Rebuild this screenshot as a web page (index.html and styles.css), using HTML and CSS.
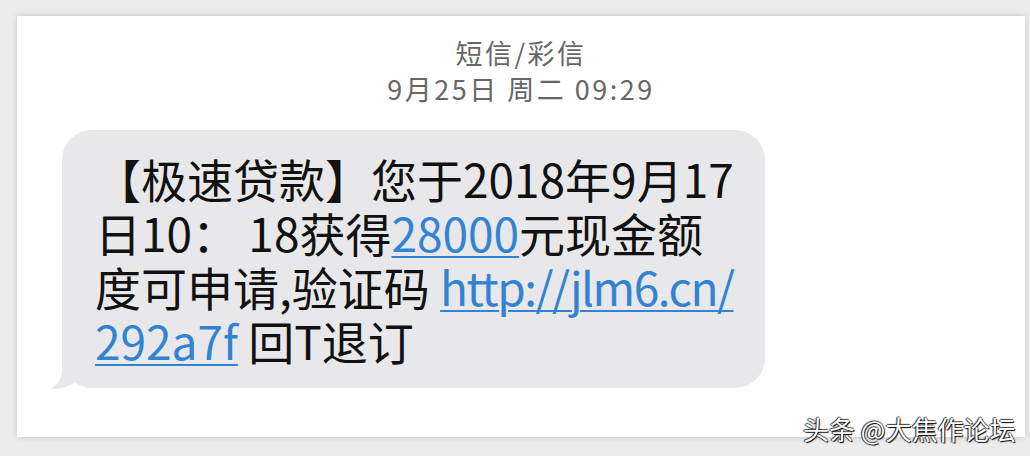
FILE: index.html
```
<!DOCTYPE html>
<html lang="zh-CN">
<head>
    <meta charset="UTF-8">
    <meta name="viewport" content="width=device-width, initial-scale=1.0">
    <title>短信/彩信</title>
    <link rel="stylesheet" href="styles.css">
</head>
<body>
    <div class="card">
        <header class="thread-head">
            <div class="thread-title">短信/彩信</div>
            <div class="thread-date">9月25日 周二 09:29</div>
        </header>

        <div class="bubble">
            <div class="line">【极速贷款】您于2018年9月17</div>
            <div class="line">日10：&nbsp;18获得<a href="#">28000</a>元现金额</div>
            <div class="line">度可申请,验证码 <a href="#" class="url">http://jlm6.cn/</a></div>
            <div class="line"><a href="#">292a7f</a> 回T退订</div>
            <svg class="tail" width="40" height="40" viewBox="0 0 40 40">
                <path d="M14 0 V20 C14 30 9 35 2 39 C12 39.5 22 36 30 31 C34 34 37 37 40 39 V0 Z" fill="#e8e8ea"/>
            </svg>
        </div>
    </div>

    <div class="watermark">头条 @大焦作论坛</div>
</body>
</html>
```

FILE: styles.css
```
body {
    margin: 0;
    background-color: #ececec;
    font-family: "Noto Sans CJK SC", "Noto Sans", sans-serif;
    width: 1030px;
    height: 456px;
    overflow: hidden;
    position: relative;
}
.card {
    margin: 16px 0 0 17px;
    width: 1008px;
    height: 421px;
    background-color: #fff;
    box-shadow: 0 0 6px rgba(0, 0, 0, 0.18);
    overflow: hidden;
}
.thread-head {
    padding-top: 19px;
    text-align: center;
    color: #666;
    font-size: 27px;
    line-height: 36px;
    letter-spacing: 2.5px;
}
.bubble {
    position: relative;
    box-sizing: border-box;
    width: 703px;
    margin: 23px 0 0 45px;
    padding: 21px 0 21px 33px;
    background-color: #e8e8ea;
    border-radius: 30px;
    color: #111;
    font-size: 46px;
    line-height: 54px;
}
.line {
    white-space: nowrap;
    height: 54px;
}
.bubble a {
    color: #3383d3;
    text-decoration: underline;
    text-decoration-thickness: 2px;
    text-underline-offset: 4px;
}
.bubble a.url {
    letter-spacing: -1.5px;
}
.tail {
    position: absolute;
    left: -14px;
    bottom: -2px;
}
.watermark {
    position: absolute;
    left: 803px;
    top: 411px;
    color: #fff;
    font-size: 26px;
    line-height: 36px;
    text-shadow: 1px 1px 1px #000, -1px 0 1px #222, 0 -1px 1px #444;
}
```
